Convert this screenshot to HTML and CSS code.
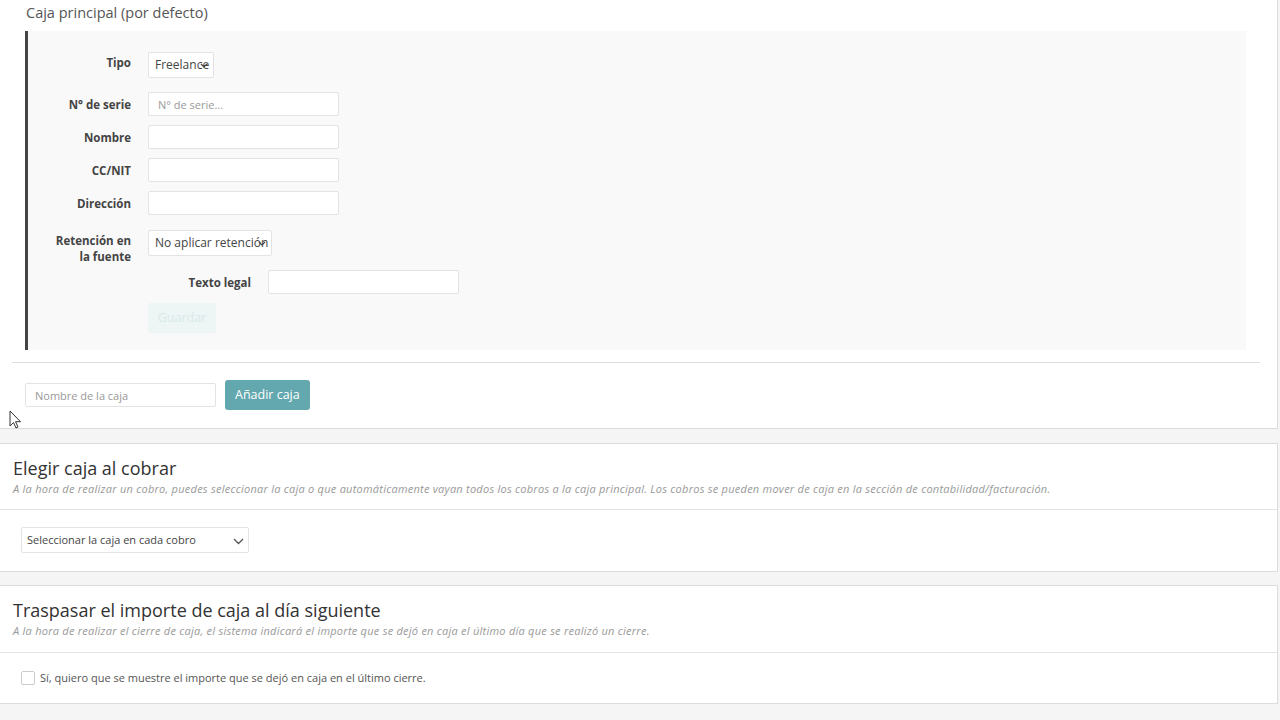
FILE: index.html
```html
<!DOCTYPE html>
<html lang="es">

<head>
    <meta charset="UTF-8">
    <meta name="viewport" content="width=device-width, initial-scale=1.0">
    <title>Cajas</title>
    <link rel="stylesheet" href="styles.css">
</head>

<body>
    <!-- caja principal -->
    <div class="panel panel-top">
        <div class="caja_title">Caja principal (por defecto)</div>
        <div class="caja_box">
            <div class="form_row row_select">
                <label>Tipo</label>
                <div class="fake_select sel_tipo">Freelance
                    <svg class="chev" width="8" height="5" viewBox="0 0 8 5"><path d="M1 1l3 3 3-3" fill="none" stroke="#444" stroke-width="1.2"/></svg>
                </div>
            </div>
            <div class="form_row">
                <label>N° de serie</label>
                <input type="text" class="caja_input" placeholder="N° de serie...">
            </div>
            <div class="form_row">
                <label>Nombre</label>
                <input type="text" class="caja_input">
            </div>
            <div class="form_row">
                <label>CC/NIT</label>
                <input type="text" class="caja_input">
            </div>
            <div class="form_row">
                <label>Dirección</label>
                <input type="text" class="caja_input">
            </div>
            <div class="form_row row_ret">
                <label>Retención en<br>la fuente</label>
                <div class="fake_select sel_ret">No aplicar retención
                    <svg class="chev" width="8" height="5" viewBox="0 0 8 5"><path d="M1 1l3 3 3-3" fill="none" stroke="#444" stroke-width="1.2"/></svg>
                </div>
            </div>
            <div class="form_row row_legal">
                <label>Texto legal</label>
                <input type="text" class="caja_input">
            </div>
            <div class="form_row row_btn">
                <label></label>
                <a href="javascript:;" class="btn_guardar">Guardar</a>
            </div>
        </div>
        <div class="sep"></div>
        <div class="add_row">
            <input type="text" class="caja_input add_input" placeholder="Nombre de la caja">
            <a href="javascript:;" class="btn_add">Añadir caja</a>
        </div>
        <svg class="cursor" width="13" height="19" viewBox="0 0 13 19"><path d="M1 1v15l3.5-3.5 2.5 5.5 2-1-2.5-5.3h5z" fill="#fff" stroke="#333" stroke-width="1"/></svg>
    </div>

    <!-- elegir caja -->
    <div class="panel panel-mid">
        <div class="panel_head">
            <h3>Elegir caja al cobrar</h3>
            <p>A la hora de realizar un cobro, puedes seleccionar la caja o que automáticamente vayan todos los cobros a la caja principal. Los cobros se pueden mover de caja en la sección de contabilidad/facturación.</p>
        </div>
        <div class="panel_body">
            <div class="fake_select sel_cobro">Seleccionar la caja en cada cobro
                <svg class="chev" width="11" height="7" viewBox="0 0 11 7"><path d="M1 1l4.5 4.5 4.5-4.5" fill="none" stroke="#555" stroke-width="1.3"/></svg>
            </div>
        </div>
    </div>

    <!-- traspasar importe -->
    <div class="panel">
        <div class="panel_head head_tall">
            <h3>Traspasar el importe de caja al día siguiente</h3>
            <p>A la hora de realizar el cierre de caja, el sistema indicará el importe que se dejó en caja el último día que se realizó un cierre.</p>
        </div>
        <div class="panel_body body_check">
            <label class="check"><span class="box"></span>Sí, quiero que se muestre el importe que se dejó en caja en el último cierre.</label>
        </div>
    </div>
</body>

</html>
```

FILE: styles.css
```css
* {
    margin: 0;
    padding: 0;
    outline: none;
    box-sizing: border-box;
}

body {
    background-color: #f5f5f5;
    font-family: "Open Sans", "Liberation Sans", sans-serif;
    color: #444;
}

a {
    text-decoration: none;
}

.panel {
    position: relative;
    margin: 0 2px 14px 0;
    background-color: #fff;
    border: 1px solid #dcdcdc;
    border-left: none;
}

.panel-top {
    border-top: none;
    padding-top: 3px;
}

.panel-mid {
    margin-bottom: 13px;
}

.caja_title {
    padding-left: 26px;
    font-size: 14.5px;
    line-height: 20px;
    color: #555;
}

.caja_box {
    margin: 8px 31px 0 25px;
    padding: 21px 0 17px 0;
    background-color: #f9f9f9;
    border-left: 3px solid #444;
}

.form_row {
    display: flex;
    align-items: flex-start;
    margin-bottom: 9px;
}

.form_row label {
    width: 103px;
    flex-shrink: 0;
    margin-right: 17px;
    padding-top: 5px;
    text-align: right;
    font-size: 11.5px;
    font-weight: bold;
    line-height: 16px;
    color: #444;
}

.row_select {
    margin-bottom: 14px;
}

.row_select label {
    padding-top: 3px;
}

.row_ret {
    height: 26px;
    margin-top: 15px;
    margin-bottom: 14px;
}

.row_ret label {
    padding-top: 3px;
}

.row_legal {
    margin-left: 120px;
}

.caja_input {
    width: 191px;
    height: 24px;
    padding: 0 9px;
    border: 1px solid #e3e3e3;
    border-radius: 2px;
    background-color: #fff;
    font-family: inherit;
    font-size: 11px;
    color: #555;
}

.caja_input::placeholder {
    color: #999;
}

.fake_select {
    position: relative;
    height: 26px;
    padding-left: 6px;
    border: 1px solid #e3e3e3;
    border-radius: 2px;
    background-color: #fff;
    font-size: 12px;
    line-height: 24px;
    color: #444;
    white-space: nowrap;
}

.fake_select .chev {
    position: absolute;
    top: 10px;
}

.sel_tipo {
    width: 66px;
}

.sel_tipo .chev {
    left: 51px;
}

.sel_ret {
    width: 124px;
}

.sel_ret .chev {
    left: 109px;
}

.btn_guardar {
    display: block;
    width: 68px;
    height: 30px;
    border-radius: 3px;
    background-color: #edf5f5;
    color: #d9e9e9;
    font-size: 12.5px;
    line-height: 30px;
    text-align: center;
}

.row_btn {
    margin-bottom: 0;
}

.sep {
    margin: 12px 17px 0 12px;
    border-top: 1px solid #dedede;
}

.add_row {
    display: flex;
    align-items: center;
    padding: 17px 0 18px 25px;
}

.add_input {
    margin-right: 9px;
}

.btn_add {
    display: block;
    height: 30px;
    padding: 0 10px;
    border-radius: 3px;
    background-color: #63a8ae;
    color: #fff;
    font-size: 12.5px;
    line-height: 30px;
}

.cursor {
    position: absolute;
    left: 9px;
    top: 410px;
}

.panel_head {
    padding: 13px 13px 13px 13px;
    border-bottom: 1px solid #e3e3e3;
}

.head_tall {
    padding-bottom: 14px;
}

.panel_head h3 {
    font-size: 18px;
    font-weight: normal;
    line-height: 23px;
    color: #333;
}

.panel_head p {
    margin-top: 1px;
    font-size: 11px;
    font-style: italic;
    letter-spacing: 0.25px;
    line-height: 15px;
    color: #999;
}

.panel_body {
    padding: 17px 21px 18px 21px;
}

.sel_cobro {
    width: 228px;
    padding-left: 5px;
    font-size: 11px;
    color: #444;
}

.sel_cobro .chev {
    left: 211px;
    top: 10px;
}

.body_check {
    padding: 18px 21px 18px 21px;
}

.check {
    display: flex;
    align-items: center;
    font-size: 11px;
    line-height: 14px;
    color: #555;
}

.check .box {
    width: 14px;
    height: 14px;
    margin-right: 5px;
    border: 1px solid #ccc;
    border-radius: 2px;
    background-color: #fff;
}
```
